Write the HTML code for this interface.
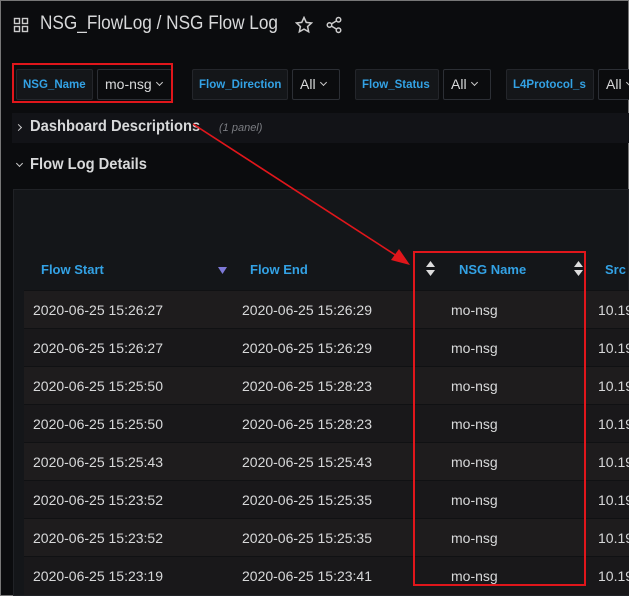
<!DOCTYPE html><html><head><style>
body{margin:0;width:629px;height:596px;background:#0b0c0e;font-family:"Liberation Sans",sans-serif;overflow:hidden;position:relative}
.frame{position:absolute;left:0;top:0;width:627px;height:594px;border:1px solid #777}
.a{position:absolute;white-space:nowrap}
.lbl{position:absolute;top:69px;height:31px;background:#141619;border:1px solid #24262b;border-radius:2px;color:#33a2e5;font-size:11.5px;font-weight:bold;line-height:30px;padding:0 6px;box-sizing:border-box;white-space:nowrap;overflow:hidden}
.sel{position:absolute;top:69px;height:31px;background:#0b0c0e;border:1px solid #2c2f35;border-radius:2px;color:#d8d9da;font-size:14px;line-height:29px;padding:0 7px;box-sizing:border-box;white-space:nowrap;overflow:hidden}
.sel i{display:inline-block;width:4px;height:4px;border-right:1.3px solid #ccc;border-bottom:1.3px solid #ccc;transform:rotate(45deg);margin-left:5px;vertical-align:4px}
.row{position:absolute;left:24px;width:605px;height:38px;color:#d8d9da;font-size:14px;line-height:38px;border-top:1px solid #101113}
.row span{position:absolute}
</style></head><body>
<div class="frame"></div>
<svg class="a" style="left:13px;top:17px" width="16" height="16" viewBox="0 0 16 16" fill="none" stroke="#ccc" stroke-width="1.4"><rect x="1.5" y="1.5" width="5" height="5"/><rect x="9.5" y="1.5" width="5" height="5"/><rect x="1.5" y="9.5" width="5" height="5"/><rect x="9.5" y="9.5" width="5" height="5"/></svg>
<div class="a" style="left:40px;top:13px;color:#d8d9da;font-size:19px;transform:scaleX(0.905);transform-origin:0 0">NSG_FlowLog / NSG Flow Log</div>
<svg class="a" style="left:295px;top:16px" width="18" height="18" viewBox="0 0 24 24" fill="none" stroke="#ccc" stroke-width="2"><path d="M12 2l3 6.5 7 .8-5.2 4.8 1.4 7-6.2-3.6-6.2 3.6 1.4-7L2 9.3l7-.8z"/></svg>
<svg class="a" style="left:325px;top:16px" width="18" height="18" viewBox="0 0 24 24" fill="none" stroke="#ccc" stroke-width="2"><circle cx="18" cy="5" r="3"/><circle cx="6" cy="12" r="3"/><circle cx="18" cy="19" r="3"/><path d="M8.6 13.5l6.8 4M15.4 6.5l-6.8 4"/></svg>
<div class="lbl" style="left:16px;width:77px">NSG_Name</div>
<div class="sel" style="left:97px;width:75px">mo-nsg<i></i></div>
<div class="a" style="left:12px;top:63px;width:161px;height:40px;border:2px solid #e0161b;box-sizing:border-box"></div>
<div class="lbl" style="left:192px;width:96px">Flow_Direction</div>
<div class="sel" style="left:292px;width:48px">All<i></i></div>
<div class="lbl" style="left:355px;width:84px">Flow_Status</div>
<div class="sel" style="left:443px;width:48px">All<i></i></div>
<div class="lbl" style="left:506px;width:88px">L4Protocol_s</div>
<div class="sel" style="left:598px;width:40px">All<i></i></div>
<div class="a" style="left:12px;top:113px;width:617px;height:30px;background:#121317"></div>
<div class="a" style="left:16px;top:125px;width:4px;height:4px;border-right:1.3px solid #ccc;border-bottom:1.3px solid #ccc;transform:rotate(-45deg)"></div>
<div class="a" style="left:30px;top:118px;color:#d8d9da;font-size:16px;font-weight:bold;transform:scaleX(0.92);transform-origin:0 0">Dashboard Descriptions</div>
<div class="a" style="left:219px;top:122px;color:#7b7d82;font-size:11px;font-style:italic">(1 panel)</div>
<div class="a" style="left:17px;top:161px;width:4px;height:4px;border-right:1.3px solid #ccc;border-bottom:1.3px solid #ccc;transform:rotate(45deg)"></div>
<div class="a" style="left:30px;top:156px;color:#d8d9da;font-size:16px;font-weight:bold;transform:scaleX(0.92);transform-origin:0 0">Flow Log Details</div>
<div class="a" style="left:13px;top:189px;width:616px;height:407px;background:#141619;border:1px solid #202226;box-sizing:border-box"></div>
<div class="a" style="left:41px;top:262px;color:#33a2e5;font-size:13px;font-weight:bold">Flow Start</div>
<svg class="a" style="left:218px;top:267px" width="9" height="8"><polygon points="0,0 9,0 4.5,7" fill="#7e79d8"/></svg>
<div class="a" style="left:250px;top:262px;color:#33a2e5;font-size:13px;font-weight:bold">Flow End</div>
<svg class="a" style="left:426px;top:261px" width="9" height="16"><polygon points="0,6 9,6 4.5,0" fill="#ddd"/><polygon points="0,9 9,9 4.5,15" fill="#ddd"/></svg>
<div class="a" style="left:459px;top:262px;color:#33a2e5;font-size:13px;font-weight:bold">NSG Name</div>
<svg class="a" style="left:574px;top:261px" width="9" height="16"><polygon points="0,6 9,6 4.5,0" fill="#ddd"/><polygon points="0,9 9,9 4.5,15" fill="#ddd"/></svg>
<div class="a" style="left:605px;top:262px;color:#33a2e5;font-size:13px;font-weight:bold">Src</div>
<div class="row" style="top:290px;background:#1e1c1d"><span style="left:9px">2020-06-25 15:26:27</span><span style="left:218px">2020-06-25 15:26:29</span><span style="left:427px">mo-nsg</span><span style="left:574px">10.19</span></div>
<div class="row" style="top:328px;background:#19181a"><span style="left:9px">2020-06-25 15:26:27</span><span style="left:218px">2020-06-25 15:26:29</span><span style="left:427px">mo-nsg</span><span style="left:574px">10.19</span></div>
<div class="row" style="top:366px;background:#1e1c1d"><span style="left:9px">2020-06-25 15:25:50</span><span style="left:218px">2020-06-25 15:28:23</span><span style="left:427px">mo-nsg</span><span style="left:574px">10.19</span></div>
<div class="row" style="top:404px;background:#19181a"><span style="left:9px">2020-06-25 15:25:50</span><span style="left:218px">2020-06-25 15:28:23</span><span style="left:427px">mo-nsg</span><span style="left:574px">10.19</span></div>
<div class="row" style="top:442px;background:#1e1c1d"><span style="left:9px">2020-06-25 15:25:43</span><span style="left:218px">2020-06-25 15:25:43</span><span style="left:427px">mo-nsg</span><span style="left:574px">10.19</span></div>
<div class="row" style="top:480px;background:#19181a"><span style="left:9px">2020-06-25 15:23:52</span><span style="left:218px">2020-06-25 15:25:35</span><span style="left:427px">mo-nsg</span><span style="left:574px">10.19</span></div>
<div class="row" style="top:518px;background:#1e1c1d"><span style="left:9px">2020-06-25 15:23:52</span><span style="left:218px">2020-06-25 15:25:35</span><span style="left:427px">mo-nsg</span><span style="left:574px">10.19</span></div>
<div class="row" style="top:556px;background:#19181a"><span style="left:9px">2020-06-25 15:23:19</span><span style="left:218px">2020-06-25 15:23:41</span><span style="left:427px">mo-nsg</span><span style="left:574px">10.19</span></div>
<div class="a" style="left:413px;top:251px;width:173px;height:335px;border:2px solid #e0161b;box-sizing:border-box"></div>
<svg class="a" style="left:0;top:0" width="629" height="596"><line x1="193" y1="124" x2="400" y2="258" stroke="#e0161b" stroke-width="1.6"/><polygon points="410,265 391,260 399,249" fill="#e0161b"/></svg>
</body></html>
